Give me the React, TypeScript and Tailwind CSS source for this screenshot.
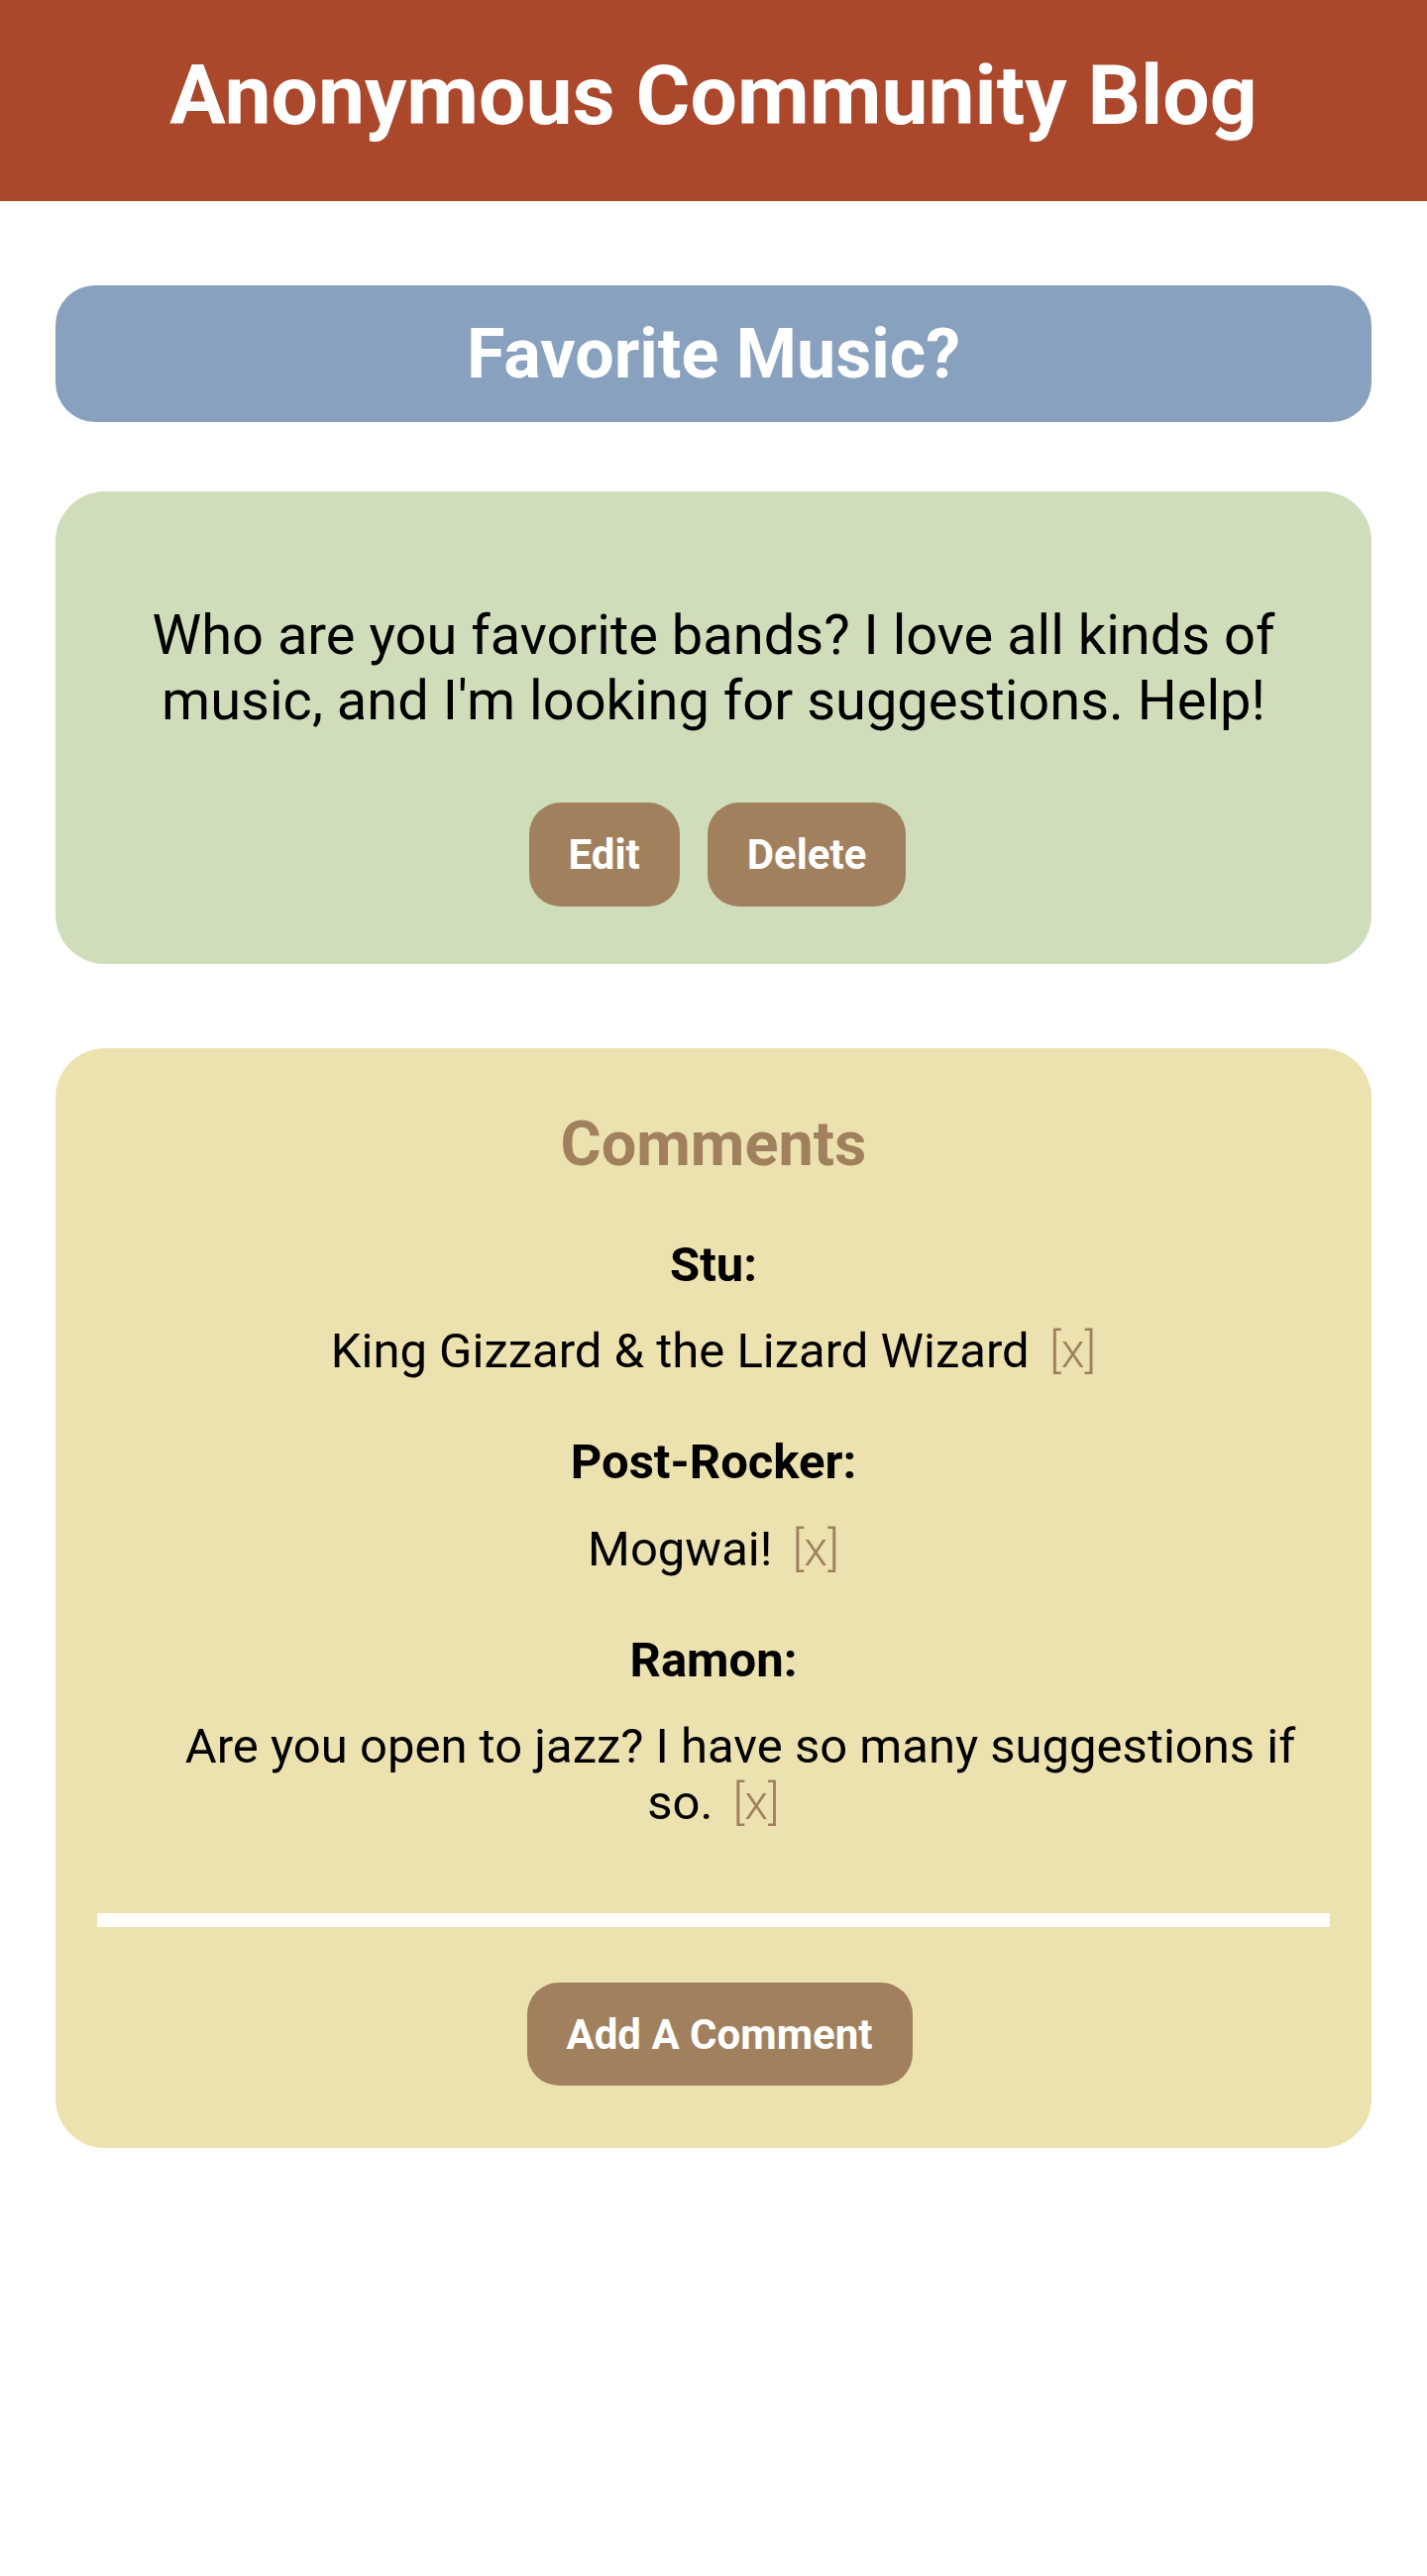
import React from "react";

const comments = [
  { name: "Stu:", text: "King Gizzard & the Lizard Wizard", indent: false },
  { name: "Post-Rocker:", text: "Mogwai!", indent: false },
  { name: "Ramon:", text: "Are you open to jazz? I have so many suggestions if so.", indent: true },
];

const App: React.FC = () => {
  return (
    <div className="min-h-screen bg-white font-['Roboto',sans-serif] text-black">
      <header className="h-[203px] bg-[#AB482C] pt-[48px] text-center">
        <h1 className="text-[84px] font-bold leading-[1.172] text-white">Anonymous Community Blog</h1>
      </header>

      <main className="px-[56px] pt-[85px] pb-[200px]">
        <div className="flex h-[138px] items-center justify-center rounded-[40px] bg-[#88A1BE]">
          <h2 className="text-[70px] font-bold leading-[1.172] text-white">Favorite Music?</h2>
        </div>

        <section className="mt-[70px] flex flex-col rounded-[50px] bg-[#D0DDBA] px-[64px] pt-[113px] pb-[58px] text-center">
          <p className="text-[56px] leading-[65.5px]">
            Who are you favorite bands? I love all kinds of music, and I'm looking for suggestions. Help!
          </p>
          <div className="mt-[70px] flex justify-center gap-[28px] pl-[8px]">
            <button className="h-[105px] rounded-[32px] bg-[#A1805E] px-10 text-[42px] font-bold text-white">
              Edit
            </button>
            <button className="h-[105px] rounded-[32px] bg-[#A1805E] px-10 text-[42px] font-bold text-white">
              Delete
            </button>
          </div>
        </section>

        <section className="mt-[85px] flex flex-col rounded-[50px] bg-[#ECE2AF] px-[42px] pt-[60px] pb-[63px] text-center">
          <h3 className="text-[63px] font-bold leading-[1.172] text-[#A1805E]">Comments</h3>

          <div className="mt-[56px] flex flex-col gap-[55px] px-[22px]">
            {comments.map((c, i) => (
              <div key={i} className="flex flex-col gap-[30px]">
                <p className="text-[49px] font-bold leading-[1.172]">{c.name}</p>
                <p className={`text-[49px] leading-[57px] ${c.indent ? "indent-[54px]" : ""}`}>
                  {c.text}{" "}
                  <button className="ml-2 font-light text-[#A1805E]">[x]</button>
                </p>
              </div>
            ))}
          </div>

          <div className="mt-[83px] h-[14px] bg-white" />

          <div className="mt-[56px] flex justify-center pl-[12px]">
            <button className="h-[104px] rounded-[32px] bg-[#A1805E] px-10 text-[42px] font-bold text-white">
              Add A Comment
            </button>
          </div>
        </section>
      </main>
    </div>
  );
};

export default App;
